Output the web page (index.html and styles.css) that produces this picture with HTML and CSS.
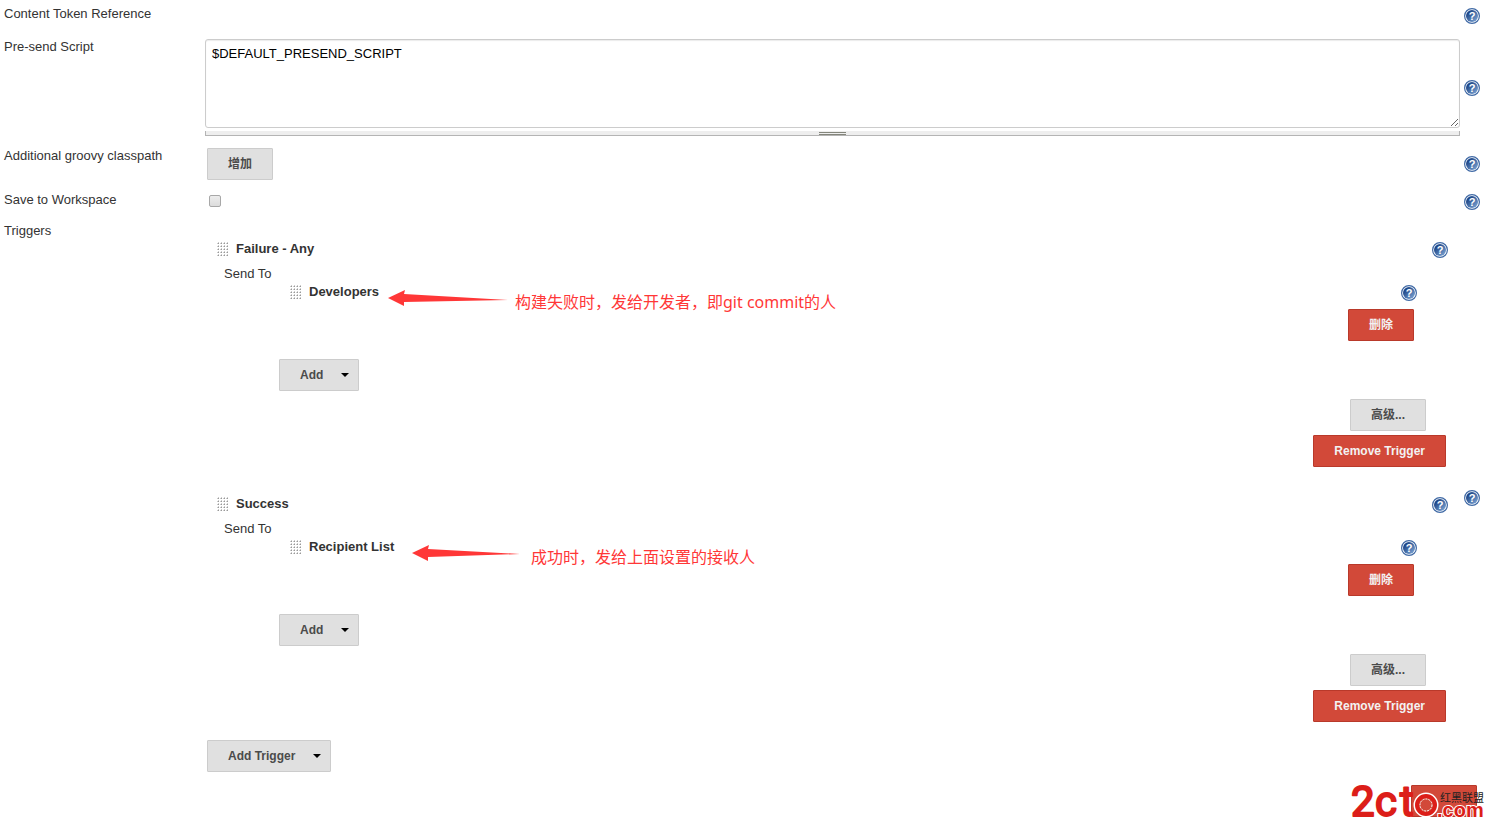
FILE: index.html
```html
<!DOCTYPE html>
<html lang="zh-CN">
<head>
<meta charset="utf-8">
<title>Editable Email Notification</title>
<link rel="stylesheet" href="styles.css">
</head>
<body>
<svg class="defs" aria-hidden="true">
  <defs>
    <linearGradient id="help-fill" x1="0" y1="0" x2="1" y2="1">
      <stop offset="0.2" stop-color="#1c4587"/>
      <stop offset="1" stop-color="#86aedb"/>
    </linearGradient>
    <symbol id="help" viewBox="0 0 16 16">
      <circle cx="8" cy="8" r="7.4" fill="#fff" stroke="#3f69a5" stroke-width="1.2"/>
      <circle cx="8" cy="8" r="6" fill="url(#help-fill)"/>
      <text x="8" y="12" text-anchor="middle" class="help-mark">?</text>
    </symbol>
    <symbol id="grip" viewBox="0 0 12 15">
      <path d="M0 1.500h12M0 4.500h12M0 7.500h12M0 10.500h12M0 13.500h12" stroke="#ccc" stroke-dasharray="2 1"/>
      <path d="M1 1.500h11M1 4.500h11M1 7.500h11M1 10.500h11M1 13.500h11" stroke="#999" stroke-dasharray="1 2"/>
      <path d="M1 0.500h11M1 3.500h11M1 6.500h11M1 9.500h11M1 12.500h11" stroke="#ccc" stroke-dasharray="1 2"/>
    </symbol>
  </defs>
</svg>
<form class="config">
  <div class="row row-first">
    <span class="label">Content Token Reference</span>
    <div class="field"></div>
    <a class="help" href="#" aria-label="Help"><svg><use href="#help"/></svg></a>
  </div>
  <div class="row">
    <label class="label" for="presend">Pre-send Script</label>
    <div class="field">
      <textarea id="presend" class="script">$DEFAULT_PRESEND_SCRIPT</textarea>
      <div class="resizer"><span class="resizer-grip"></span></div>
    </div>
    <a class="help" href="#" aria-label="Help"><svg><use href="#help"/></svg></a>
  </div>
  <div class="row">
    <span class="label">Additional groovy classpath</span>
    <div class="field field-inset"><button type="button" class="btn">增加</button></div>
    <a class="help" href="#" aria-label="Help"><svg><use href="#help"/></svg></a>
  </div>
  <div class="row">
    <label class="label" for="save">Save to Workspace</label>
    <div class="field field-inset"><input id="save" type="checkbox" class="check"></div>
    <a class="help" href="#" aria-label="Help"><svg><use href="#help"/></svg></a>
  </div>
  <div class="row">
    <span class="label">Triggers</span>
    <div class="field">
      <div class="triggers">
        <section class="trigger">
          <div class="head">
            <svg class="grip"><use href="#grip"/></svg>
            <b class="title">Failure - Any</b>
            <a class="help" href="#" aria-label="Help"><svg><use href="#help"/></svg></a>
          </div>
          <div class="send-to">Send To</div>
          <div class="recipient">
            <div class="head">
              <svg class="grip"><use href="#grip"/></svg>
              <b class="title">Developers</b>
              <a class="help" href="#" aria-label="Help"><svg><use href="#help"/></svg></a>
            </div>
            <div class="note note-failure">
              <svg class="arrow" viewBox="0 0 120 16"><path d="M0 8L17 0L16 4L120 10L16 12V16Z" fill="#ff3737"/></svg>
              <span class="note-text">构建失败时，发给开发者，即git commit的人</span>
            </div>
            <div class="delete"><button type="button" class="btn btn-danger">删除</button></div>
          </div>
          <div class="add"><button type="button" class="btn btn-menu">Add</button></div>
          <div class="advanced"><button type="button" class="btn">高级...</button></div>
          <div class="remove"><button type="button" class="btn btn-danger">Remove Trigger</button></div>
        </section>
        <section class="trigger">
          <div class="head">
            <svg class="grip"><use href="#grip"/></svg>
            <b class="title">Success</b>
            <a class="help" href="#" aria-label="Help"><svg><use href="#help"/></svg></a>
          </div>
          <div class="send-to">Send To</div>
          <div class="recipient">
            <div class="head">
              <svg class="grip"><use href="#grip"/></svg>
              <b class="title">Recipient List</b>
              <a class="help" href="#" aria-label="Help"><svg><use href="#help"/></svg></a>
            </div>
            <div class="note note-success">
              <svg class="arrow arrow-short" viewBox="0 0 108 16"><path d="M0 8L17 0L16 4L108 9L16 12V16Z" fill="#ff3737"/></svg>
              <span class="note-text">成功时，发给上面设置的接收人</span>
            </div>
            <div class="delete"><button type="button" class="btn btn-danger">删除</button></div>
          </div>
          <div class="add"><button type="button" class="btn btn-menu">Add</button></div>
          <div class="advanced"><button type="button" class="btn">高级...</button></div>
          <div class="remove"><button type="button" class="btn btn-danger">Remove Trigger</button></div>
        </section>
      </div>
      <div class="field-inset"><button type="button" class="btn btn-menu">Add Trigger</button></div>
    </div>
    <a class="help" href="#" aria-label="Help"><svg><use href="#help"/></svg></a>
  </div>
  <div class="footer">
    <button type="button" class="btn btn-danger btn-blank" aria-label="Delete"></button>
    <svg class="logo" viewBox="0 0 136 36" role="img" aria-label="2cto.com">
      <g class="logo-big">
        <text x="1" y="32">2</text>
        <text x="25" y="32">c</text>
        <text x="50" y="32">t</text>
      </g>
      <circle cx="76" cy="21" r="9" fill="none" stroke="#fff" stroke-width="7"/>
      <circle cx="76" cy="21" r="9" fill="#d24939" stroke="#dc1e19" stroke-width="4"/>
      <circle cx="76" cy="21" r="6" fill="none" stroke="#fff" stroke-dasharray="2 1"/>
      <text x="87" y="33" class="logo-com">.com</text>
      <text x="90" y="18" class="logo-cn">红黑联盟</text>
    </svg>
  </div>
</form>
</body>
</html>
```

FILE: styles.css
```css
* { box-sizing: border-box; }

body {
  margin: 0;
  background: #fff;
  color: #333;
  font: 13px/16px "Liberation Sans", Arial, "Noto Sans CJK SC", sans-serif;
}

.defs { position: absolute; width: 0; height: 0; }

.row {
  display: grid;
  grid-template-columns: 201px 1fr 20px;
  padding: 6px 8px 6px 4px;
  min-height: 31px;
}
.row-first { padding-bottom: 8px; min-height: 33px; }

.field { min-width: 0; }
.field-inset { padding-left: 2px; }

.help { display: block; width: 16px; height: 16px; }
.help svg { display: block; width: 16px; height: 16px; }
.row > .help { align-self: center; justify-self: end; }
.help-mark { font: bold 11px "Liberation Sans", sans-serif; fill: #fff; }

.script {
  display: block;
  width: 100%;
  height: 89px;
  padding: 6px;
  border: 1px solid #ccc;
  border-radius: 3px;
  box-shadow: inset 0 1px 1px rgba(0, 0, 0, 0.08);
  color: #000;
  font: inherit;
  resize: vertical;
}

.resizer {
  display: flex;
  justify-content: center;
  height: 5px;
  margin-top: 3px;
  border: 1px solid #b4b4b4;
  border-top: 0;
  background: #eee;
}
.resizer-grip {
  width: 27px;
  height: 3px;
  margin-top: 1px;
  border-top: 1px solid #84867c;
  border-bottom: 1px solid #84867c;
}

.btn {
  display: inline-flex;
  align-items: center;
  height: 32px;
  padding: 0 20px;
  border: 1px solid #ccc;
  border-radius: 1px;
  background: #e0e0e0;
  color: #4b4b4b;
  font: bold 12px/16px "Liberation Sans", Arial, "Noto Sans CJK SC", sans-serif;
  vertical-align: top;
}
.btn-danger { border-color: #b9392a; background: #d24939; color: #f2f2f2; }
.btn-blank { width: 66px; }
.btn-menu { gap: 18px; padding-right: 9px; }
.btn-menu::after {
  content: "";
  border: 4px solid transparent;
  border-top-color: #000;
  border-bottom: 0;
}

.check {
  appearance: none;
  display: block;
  width: 12px;
  height: 12px;
  margin: 3px 2px;
  border: 1px solid #a8a8a8;
  border-radius: 2px;
  background: linear-gradient(#ededed, #dcdcdc);
}

.triggers { padding-top: 7px; }
.trigger { padding: 10px 12px 18px; }

.head { display: flex; align-items: center; gap: 7px; height: 20px; }
.head .help { margin-left: auto; }
.grip { width: 12px; height: 15px; margin-bottom: 2px; }
.title { line-height: 16px; margin-bottom: 2px; }

.send-to { padding: 6px 7px 0; }

.recipient { position: relative; padding: 1px 31px 0 73px; }
.delete { display: flex; justify-content: flex-end; padding: 6px 3px 0; }
.add { padding: 18px 62px 0; }
.advanced { display: flex; justify-content: flex-end; padding: 8px 22px 0; }
.remove { display: flex; justify-content: flex-end; padding: 4px 2px 0; }

/* Hand-drawn remarks laid over the form */
.note { position: absolute; top: 8px; display: flex; align-items: flex-start; white-space: nowrap; }
.note-failure { left: 171px; gap: 7px; }
.note-success { left: 195px; gap: 11px; }
.arrow { width: 120px; height: 16px; }
.arrow-short { width: 108px; }
.note-text {
  padding-top: 2px;
  color: #ff3737;
  font: 16px/20px "Noto Sans", "Noto Sans CJK SC", sans-serif;
}

.footer {
  position: relative;
  display: flex;
  justify-content: flex-end;
  padding: 7px 11px 0;
}
.logo { position: absolute; top: 6px; right: 2px; width: 136px; height: 36px; overflow: visible; }
.logo-big {
  font: 42px Roboto, sans-serif;
  fill: #dc1e19;
  stroke: #dc1e19;
  stroke-width: 2px;
  stroke-linejoin: round;
}
.logo-com { font: bold 20px "Liberation Sans", sans-serif; fill: #dc1e19; stroke: #fff; stroke-width: 2px; paint-order: stroke; }
.logo-cn { font: 11px "Noto Sans CJK SC", sans-serif; fill: #222; }
```
